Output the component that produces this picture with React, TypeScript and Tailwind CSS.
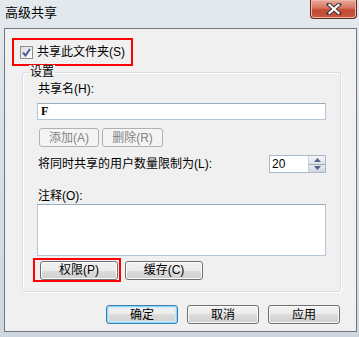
import type { ReactNode } from 'react';

const font = "font-['Liberation_Sans','Noto_Sans_CJK_SC',sans-serif]";

function Win7Button({
  children,
  width,
  variant = 'normal',
}: {
  children: ReactNode;
  width: string;
  variant?: 'normal' | 'default' | 'disabled';
}) {
  const look =
    variant === 'disabled'
      ? 'border-[#adb2b5] bg-[#f4f4f4] text-[#838383]'
      : variant === 'default'
        ? 'border-[#3c7fb1] bg-[linear-gradient(#f2f2f2_0%,#ebebeb_50%,#dddddd_50%,#cfcfcf_100%)] shadow-[inset_0_0_0_1px_#8fd6f7,inset_0_0_0_2px_#c9ecfb] text-black'
        : 'border-[#707070] bg-[linear-gradient(#f2f2f2_0%,#ebebeb_50%,#dddddd_50%,#cfcfcf_100%)] shadow-[inset_0_0_0_1px_#fbfbfb] text-black';
  return (
    <div
      className={`${width} h-[19px] flex items-center justify-center rounded-[3px] border text-[12px] leading-none ${look}`}
    >
      {children}
    </div>
  );
}

function CloseButton() {
  return (
    <div className="w-[47px] h-[19px] mr-[2px] flex items-center justify-center rounded-b-[4px] border border-t-0 border-[#5a2a22] bg-[linear-gradient(#e9a99b_0%,#d7735f_45%,#c34a31_55%,#c9583f_100%)] shadow-[inset_0_0_0_1px_#f0b7a8]">
      <svg width="16" height="12" viewBox="0 0 16 12">
        <path d="M3 1.5 L13 10.5 M13 1.5 L3 10.5" stroke="#43363a" strokeWidth="4.2" strokeLinecap="square" />
        <path d="M3.5 2 L12.5 10 M12.5 2 L3.5 10" stroke="#ffffff" strokeWidth="2.2" strokeLinecap="square" />
      </svg>
    </div>
  );
}

function Checkbox() {
  return (
    <div className="w-[13px] h-[13px] border border-[#8f8f8f] bg-[linear-gradient(135deg,#dcdcdc,#ffffff)] flex items-center justify-center">
      <svg width="9" height="9" viewBox="0 0 9 9">
        <path d="M1 4.5 L3.5 7.5 L8 1" stroke="#4a5f97" strokeWidth="2" fill="none" />
      </svg>
    </div>
  );
}

function Spinner() {
  return (
    <div className="flex h-[18px] w-[57px] border border-[#a9b8c8] bg-white">
      <div className="flex-1 pl-[2px] text-[12px] leading-[16px]">20</div>
      <div className="w-[17px] flex flex-col border-l border-[#c9d2dc]">
        <div className="flex-1 flex items-center justify-center bg-[linear-gradient(#f4f6f8,#dde3ea)] border-b border-[#9aa7b6]">
          <svg width="7" height="4" viewBox="0 0 7 4">
            <path d="M0 4 L3.5 0 L7 4 Z" fill="#4d6185" />
          </svg>
        </div>
        <div className="flex-1 flex items-center justify-center bg-[linear-gradient(#e6ebf0,#cfd7e0)]">
          <svg width="7" height="4" viewBox="0 0 7 4">
            <path d="M0 0 L3.5 4 L7 0 Z" fill="#4d6185" />
          </svg>
        </div>
      </div>
    </div>
  );
}

export default function App() {
  return (
    <div
      className={`${font} w-[359px] h-[337px] overflow-hidden text-black bg-[linear-gradient(180deg,#e4e9ee_0%,#d9e0e7_40%,#cfd6de_100%)]`}
    >
      {/* title bar */}
      <div className="h-[28px] flex items-start justify-between">
        <div className="pl-[5px] pt-[6px] text-[13px] leading-[14px]">高级共享</div>
        <CloseButton />
      </div>

      {/* client area */}
      <div className="ml-[4px] w-[353px] h-[304px] border border-[#6f7780] bg-[#f0f0f0]">
        {/* share checkbox, highlighted */}
        <div className="mt-[9px] ml-[7px] w-[121px] h-[28px] border-2 border-[#ff0000] flex items-center pl-[6px] gap-[4px]">
          <Checkbox />
          <span className="text-[12px] leading-none">共享此文件夹(S)</span>
        </div>

        {/* settings group */}
        <div className="relative mt-[6px] ml-[17px] w-[319px] h-[220px] rounded-[3px] border border-[#d5dfe5] shadow-[inset_1px_1px_0_#ffffff,1px_1px_0_#ffffff]">
          <span className="absolute left-[6px] -top-[8px] px-[1px] bg-[#f0f0f0] text-[12px] leading-[14px]">
            设置
          </span>

          <div className="mt-[9px] ml-[15px] text-[12px] leading-[14px]">共享名(H):</div>
          <div className="mt-[7px] ml-[14px] w-[289px] h-[17px] border border-[#b5c5d6] border-t-[#9aabbc] bg-white pl-[3px] text-[12px] leading-[15px] font-bold font-['Liberation_Serif',serif]">
            F
          </div>

          <div className="mt-[8px] ml-[16px] flex gap-[3px]">
            <Win7Button width="w-[60px]" variant="disabled">添加(A)</Win7Button>
            <Win7Button width="w-[61px]" variant="disabled">删除(R)</Win7Button>
          </div>

          <div className="mt-[8px] ml-[15px] w-[288px] flex items-center justify-between">
            <span className="text-[12px] leading-[14px]">将同时共享的用户数量限制为(L):</span>
            <Spinner />
          </div>

          <div className="mt-[16px] ml-[15px] text-[12px] leading-[14px]">注释(O):</div>
          <div className="mt-[1px] ml-[14px] w-[289px] h-[52px] border border-[#b5c5d6] border-t-[#9aabbc] bg-white" />

          <div className="mt-[2px] ml-[10px] flex items-center">
            <div className="w-[88px] h-[24px] border-2 border-[#ff0000] flex items-center pl-[5px]">
              <Win7Button width="w-[78px]">权限(P)</Win7Button>
            </div>
            <div className="ml-[4px]">
              <Win7Button width="w-[78px]">缓存(C)</Win7Button>
            </div>
          </div>
        </div>

        {/* dialog buttons */}
        <div className="mt-[13px] pr-[16px] flex justify-end gap-[9px]">
          <Win7Button width="w-[72px]" variant="default">确定</Win7Button>
          <Win7Button width="w-[72px]">取消</Win7Button>
          <Win7Button width="w-[72px]">应用</Win7Button>
        </div>
      </div>
    </div>
  );
}
